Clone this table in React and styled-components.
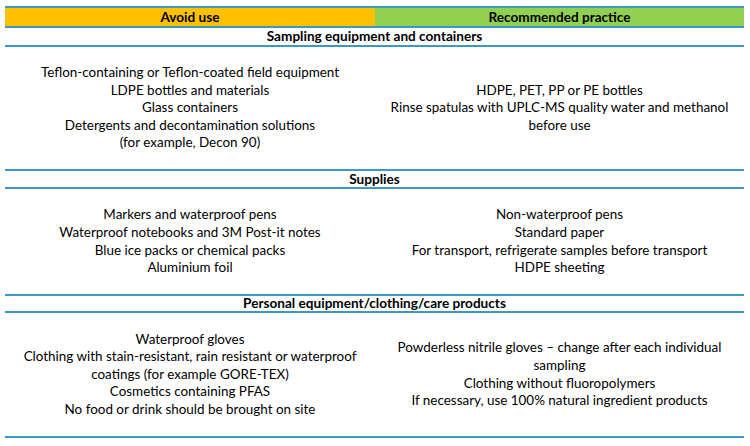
import React from "react";
import styled, { createGlobalStyle } from "styled-components";

const Global = createGlobalStyle`
  html, body { margin: 0; padding: 0; background: #ffffff; }
  body { font-family: Lato, "Noto Sans", sans-serif; color: #000; }
`;

const Page = styled.div`
  padding: 6px 6px 0 5px;
  width: 750px;
  box-sizing: border-box;
`;

const Table = styled.div`
  border-top: 2px solid #3a98c4;
  display: grid;
  grid-template-columns: 370px 1fr;
`;

const HeadCell = styled.div`
  background: ${(p) => p.$bg};
  height: 18px;
  line-height: 18px;
  text-align: center;
  font-weight: 700;
  font-size: 13.6px;
  border-bottom: 2px solid #3a98c4;
`;

const SectionTitle = styled.div`
  grid-column: 1 / -1;
  height: ${(p) => p.$h}px;
  line-height: ${(p) => p.$h}px;
  text-align: center;
  font-weight: 700;
  font-size: 13.6px;
  border-bottom: 2px solid #3a98c4;
`;

const Cell = styled.div`
  height: ${(p) => p.$h}px;
  display: flex;
  flex-direction: column;
  justify-content: center;
  align-items: center;
  border-bottom: 2px solid #3a98c4;
  font-size: 13.45px;
  line-height: 17.6px;
  text-align: center;
`;

const Line = styled.div`
  white-space: nowrap;
`;

const sections = [
  {
    title: "Sampling equipment and containers",
    th: 17,
    h: 122,
    avoid: [
      "Teflon-containing or Teflon-coated field equipment",
      "LDPE bottles and materials",
      "Glass containers",
      "Detergents and decontamination solutions",
      "(for example, Decon 90)",
    ],
    rec: [
      "HDPE, PET, PP or PE bottles",
      "Rinse spatulas with UPLC-MS quality water and methanol",
      "before use",
    ],
  },
  {
    title: "Supplies",
    th: 16,
    h: 105,
    avoid: [
      "Markers and waterproof pens",
      "Waterproof notebooks and 3M Post-it notes",
      "Blue ice packs or chemical packs",
      "Aluminium foil",
    ],
    rec: [
      "Non-waterproof pens",
      "Standard paper",
      "For transport, refrigerate samples before transport",
      "HDPE sheeting",
    ],
  },
  {
    title: "Personal equipment/clothing/care products",
    th: 15,
    h: 123,
    avoid: [
      "Waterproof gloves",
      "Clothing with stain-resistant, rain resistant or waterproof",
      "coatings (for example GORE-TEX)",
      "Cosmetics containing PFAS",
      "No food or drink should be brought on site",
    ],
    rec: [
      "Powderless nitrile gloves \u2013 change after each individual",
      "sampling",
      "Clothing without fluoropolymers",
      "If necessary, use 100% natural ingredient products",
    ],
  },
];

export default function App() {
  return (
    <Page>
      <Global />
      <Table>
        <HeadCell $bg="#ffc000">Avoid use</HeadCell>
        <HeadCell $bg="#92d050">Recommended practice</HeadCell>
        {sections.map((s) => (
          <React.Fragment key={s.title}>
            <SectionTitle $h={s.th}>{s.title}</SectionTitle>
            <Cell $h={s.h}>
              {s.avoid.map((t) => (
                <Line key={t}>{t}</Line>
              ))}
            </Cell>
            <Cell $h={s.h}>
              {s.rec.map((t) => (
                <Line key={t}>{t}</Line>
              ))}
            </Cell>
          </React.Fragment>
        ))}
      </Table>
    </Page>
  );
}
